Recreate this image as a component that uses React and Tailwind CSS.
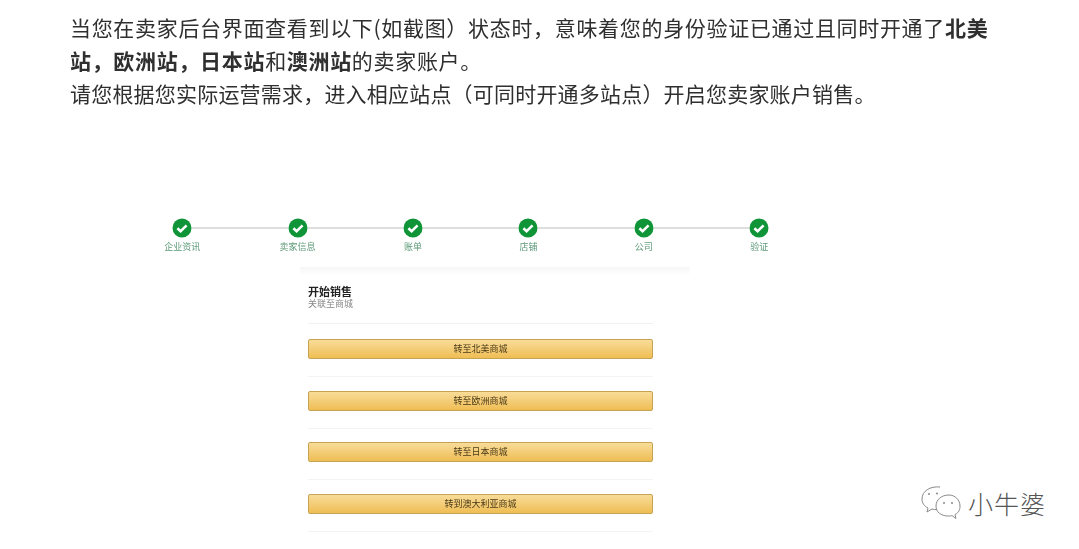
const steps = ["企业资讯", "卖家信息", "账单", "店铺", "公司", "验证"];
const buttons = ["转至北美商城", "转至欧洲商城", "转至日本商城", "转到澳大利亚商城"];

const CheckCircle = () => (
  <svg width="20" height="20" viewBox="0 0 20 20" className="shrink-0">
    <circle cx="10" cy="10" r="9.5" fill="#0f9438" />
    <path d="M5.4 10.200l3.200 3 6-5.800" fill="none" stroke="#fff" strokeWidth="2.6" />
  </svg>
);

const WeChatIcon = () => (
  <svg width="42" height="38" viewBox="0 0 42 38" fill="none" stroke="#8a8a8a" strokeWidth="1" className="shrink-0">
    <path d="M20 3C10 2 2 7 2 15c0 4 2 7 6 9l-1 4 5-3c2 .6 3 .6 5 .6" />
    <path d="M9 10h.01M17 9.500h.01" strokeWidth="2" strokeLinecap="round" />
    <path d="M29 11c-8 0-13 5-13 11s5 10 12 10c2 0 3 0 4-.5l4 3-1-4c4-2 5-5 5-8.500 0-6-5-11-11-11z" />
    <path d="M24 19h.01M32 19h.01" strokeWidth="2" strokeLinecap="round" />
  </svg>
);

export default function App() {
  return (
    <div className="relative w-[1079px] h-[549px] overflow-hidden bg-white font-['Noto_Sans_CJK_SC','Liberation_Sans',sans-serif]">
      <div className="pt-[11px] px-[70px] text-[21px] leading-[33px] text-[#2f2f2f] blur-[0.3px]">
        <p className="w-[930px] tracking-[0.68px]">
          当您在卖家后台界面查看到以下(如截图）状态时，意味着您的身份验证已通过且同时开通了
          <b className="font-bold">北美站，欧洲站，日本站</b>和<b className="font-bold">澳洲站</b>的卖家账户。
        </p>
        <p className="whitespace-nowrap tracking-[0.2px]">请您根据您实际运营需求，进入相应站点（可同时开通多站点）开启您卖家账户销售。</p>
      </div>

      {/* the pasted seller-central screenshot, slightly soft */}
      <div className="mt-[108px] blur-[0.5px]">
        <div className="ml-[124.500px] w-[692.500px] grid grid-cols-6">
          {steps.map((label, i) => (
            <div key={label} className="flex flex-col items-center">
              <div className="w-full flex items-center">
                <div className={i === 0 ? "flex-1" : "flex-1 h-[2px] bg-[#dedede]"} />
                <CheckCircle />
                <div className={i === 5 ? "flex-1" : "flex-1 h-[2px] bg-[#dedede]"} />
              </div>
              <span className="mt-[3px] text-[9px] leading-[12px] text-[#5d9a78]">{label}</span>
            </div>
          ))}
        </div>

        <div className="ml-[300px] mt-[14px] w-[390px] h-[8px] bg-gradient-to-b from-[#f6f6f6] to-white" />

        <div className="ml-[308px] w-[345px]">
          <div className="pt-[9px] h-[49px] mb-[1.500px] border-b border-[#f1f1f1]">
            <div className="text-[11px] leading-[14px] font-bold text-[#222]">开始销售</div>
            <div className="text-[9px] leading-[12px] text-[#888]">关联至商城</div>
          </div>
          {buttons.map((label) => (
            <div key={label} className="pt-[13.500px] h-[51.500px] border-b border-[#f4f4f4]">
              <div className="h-[20px] flex items-center justify-center rounded-[2px] border border-[#c6a253] bg-gradient-to-b from-[#f8dc98] to-[#efbd52] text-[9px] text-[#4a3a18]">
                {label}
              </div>
            </div>
          ))}
        </div>
      </div>

      {/* watermark over the picture */}
      <div className="absolute left-[920px] top-[484px] flex items-center gap-[6px]">
        <WeChatIcon />
        <span className="text-[25px] leading-[38px] font-light tracking-[1px] text-[#555]">小牛婆</span>
      </div>
    </div>
  );
}
